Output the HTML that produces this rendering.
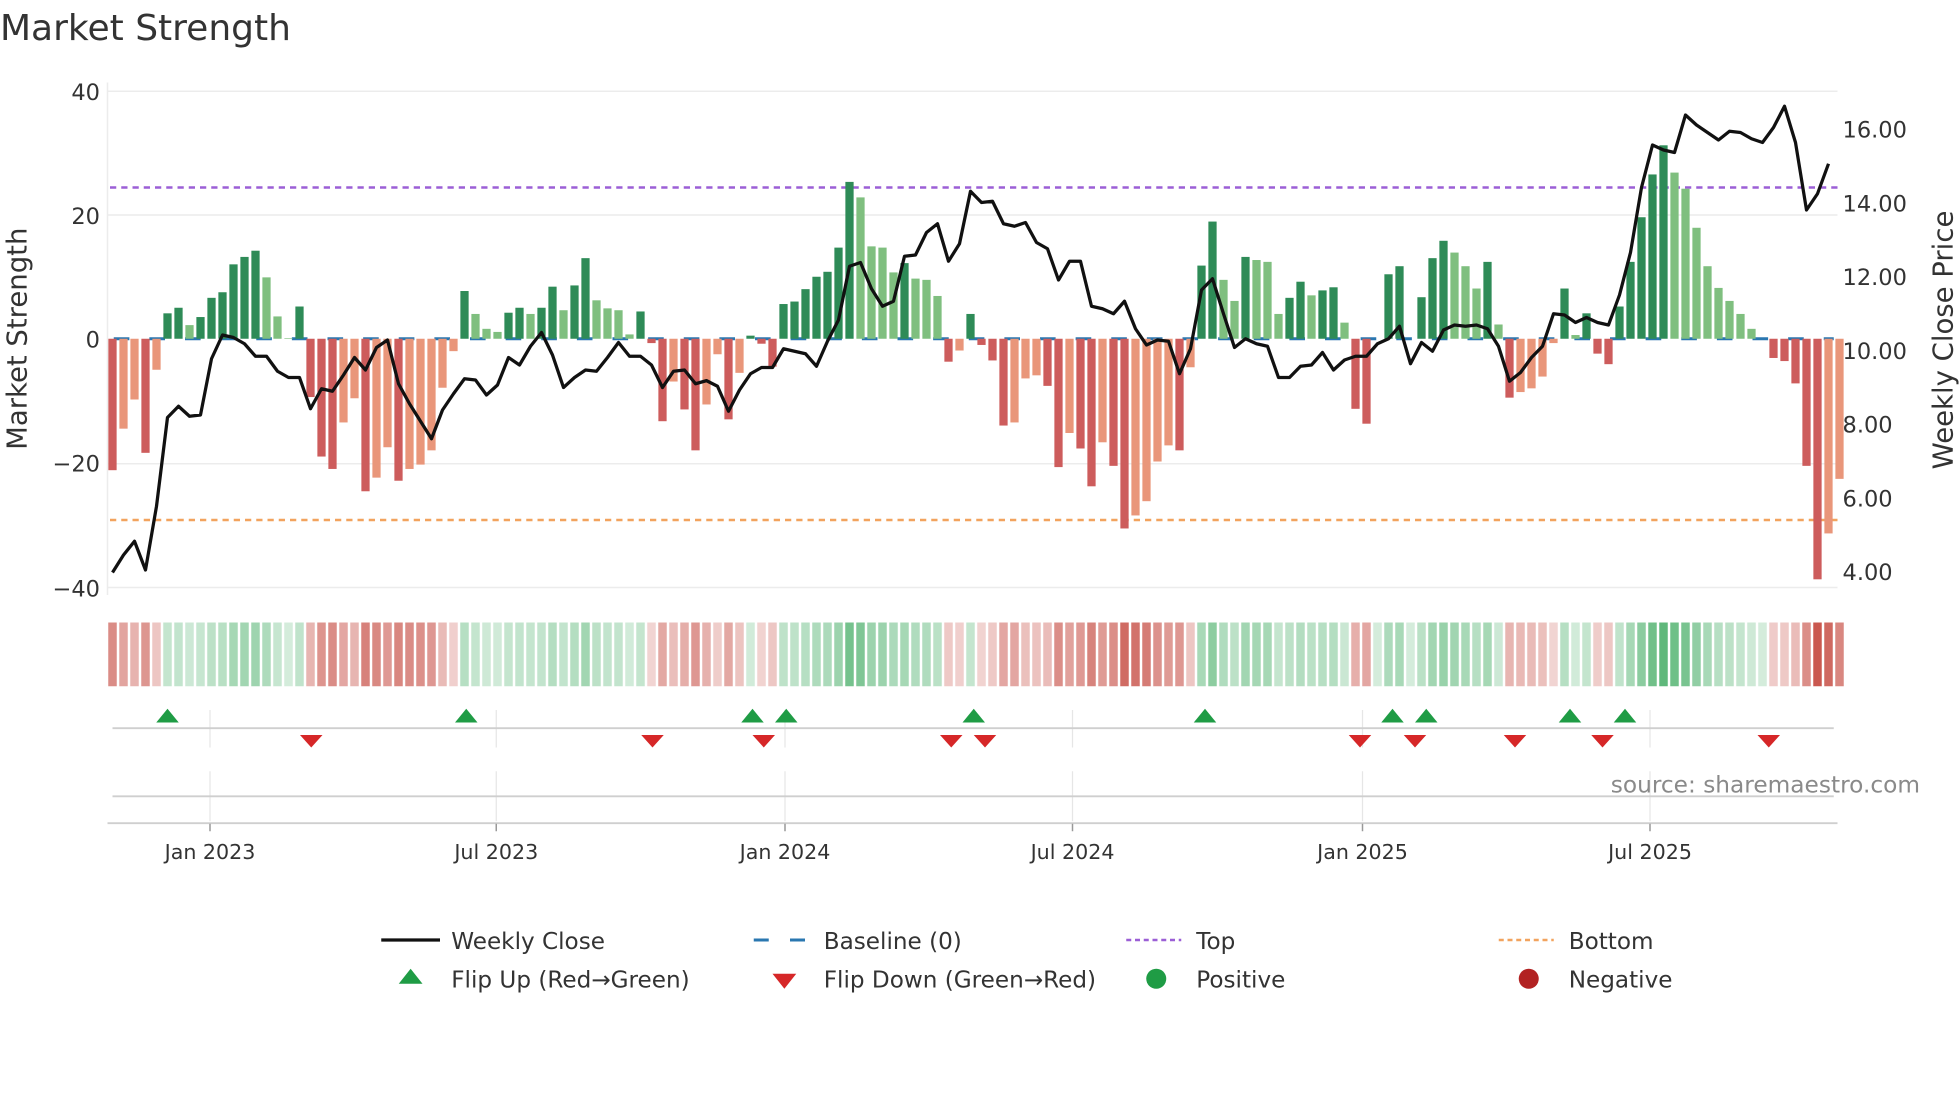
<!DOCTYPE html>
<html><head><meta charset="utf-8"><style>
html,body{margin:0;padding:0;background:#fff;}
svg{display:block;font-family:"DejaVu Sans","Liberation Sans",sans-serif;}
</style></head><body>
<svg id="s" width="1960" height="1102" viewBox="0 0 1568 881.6" xmlns="http://www.w3.org/2000/svg">
<rect width="1568" height="881.6" fill="#fff"/>
<text x="0" y="32" font-size="28.8" fill="#333">Market Strength</text>
<g stroke="#ececec" stroke-width="1.2">
<line x1="86" y1="73" x2="1470" y2="73"/><line x1="86" y1="172" x2="1470" y2="172"/>
<line x1="86" y1="371" x2="1470" y2="371"/><line x1="86" y1="470" x2="1470" y2="470"/>
<line x1="86" y1="66" x2="86" y2="476"/>
</g>
<g font-size="18" fill="#333" text-anchor="end">
<text x="80" y="80">40</text><text x="80" y="179">20</text><text x="80" y="278">0</text>
<text x="80" y="377">−20</text><text x="80" y="477">−40</text>
</g>
<g font-size="18" fill="#333">
<text x="1474" y="110">16.00</text><text x="1474" y="169">14.00</text><text x="1474" y="228">12.00</text>
<text x="1474" y="287">10.00</text><text x="1474" y="346">8.00</text><text x="1474" y="405">6.00</text><text x="1474" y="464">4.00</text>
</g>
<text transform="translate(21,271) rotate(-90)" font-size="22" fill="#333" text-anchor="middle">Market Strength</text>
<text transform="translate(1562,272) rotate(-90)" font-size="22" fill="#333" text-anchor="middle">Weekly Close Price</text>
<line x1="88" y1="150" x2="1470" y2="150" stroke="#9b5fd6" stroke-width="2" stroke-dasharray="5 4"/>
<line x1="88" y1="416" x2="1470" y2="416" stroke="#f2a35e" stroke-width="2" stroke-dasharray="5 4"/>
<line x1="91" y1="271" x2="1467" y2="271" stroke="#2a77b0" stroke-width="2.4" stroke-dasharray="12.5 16"/>
<g id="bars"></g>
<polyline id="price" fill="none" stroke="#111" stroke-width="2.6" stroke-linejoin="round"/>
<g id="heat"></g>
<g stroke="#e6e6e6" stroke-width="1">
<line x1="168" y1="568" x2="168" y2="598"/><line x1="397" y1="568" x2="397" y2="598"/><line x1="628" y1="568" x2="628" y2="598"/><line x1="858" y1="568" x2="858" y2="598"/><line x1="1090" y1="568" x2="1090" y2="598"/><line x1="1320" y1="568" x2="1320" y2="598"/>
<line x1="168" y1="617" x2="168" y2="657"/><line x1="397" y1="617" x2="397" y2="657"/><line x1="628" y1="617" x2="628" y2="657"/><line x1="858" y1="617" x2="858" y2="657"/><line x1="1090" y1="617" x2="1090" y2="657"/><line x1="1320" y1="617" x2="1320" y2="657"/>
</g>
<line x1="90" y1="582.5" x2="1467" y2="582.5" stroke="#cfcfcf" stroke-width="1.5"/>
<line x1="90" y1="637" x2="1467" y2="637" stroke="#cfcfcf" stroke-width="1.5"/>
<line x1="86" y1="658.5" x2="1470" y2="658.5" stroke="#cfcfcf" stroke-width="1.5"/>
<g stroke="#999" stroke-width="1.2">
<line x1="168" y1="659" x2="168" y2="665"/><line x1="397" y1="659" x2="397" y2="665"/><line x1="628" y1="659" x2="628" y2="665"/><line x1="858" y1="659" x2="858" y2="665"/><line x1="1090" y1="659" x2="1090" y2="665"/><line x1="1320" y1="659" x2="1320" y2="665"/>
</g>
<g id="flips"></g>
<text x="1536" y="634" font-size="18.6" fill="#8a8a8a" text-anchor="end">source: sharemaestro.com</text>
<g font-size="16.5" fill="#333" text-anchor="middle">
<text x="168" y="687">Jan 2023</text><text x="397" y="687">Jul 2023</text><text x="628" y="687">Jan 2024</text>
<text x="858" y="687">Jul 2024</text><text x="1090" y="687">Jan 2025</text><text x="1320" y="687">Jul 2025</text>
</g>
<g font-size="18.5" fill="#333">
<line x1="305" y1="752" x2="352" y2="752" stroke="#111" stroke-width="2.6"/>
<text x="361" y="759">Weekly Close</text>
<line x1="603" y1="752" x2="647" y2="752" stroke="#2a77b0" stroke-width="2.4" stroke-dasharray="12 17"/>
<text x="659" y="759">Baseline (0)</text>
<line x1="901" y1="752" x2="945" y2="752" stroke="#9b5fd6" stroke-width="2" stroke-dasharray="4 3"/>
<text x="957" y="759">Top</text>
<line x1="1199" y1="752" x2="1243" y2="752" stroke="#f2a35e" stroke-width="2" stroke-dasharray="4 3"/>
<text x="1255" y="759">Bottom</text>
<polygon points="319,787 338,787 328.5,775" fill="#1f9c45"/>
<text x="361" y="790">Flip Up (Red→Green)</text>
<polygon points="618,779 637,779 627.5,791" fill="#d62728"/>
<text x="659" y="790">Flip Down (Green→Red)</text>
<circle cx="925" cy="783" r="8" fill="#1f9c45"/>
<text x="957" y="790">Positive</text>
<circle cx="1223" cy="783" r="8" fill="#b22222"/>
<text x="1255" y="790">Negative</text>
</g>
</svg>
<script>
var V="-21.2D,-14.5S,-9.8S,-18.4D,-5S,4.1G,5G,2.2L,3.5G,6.6G,7.5G,12G,13.2G,14.2G,9.9L,3.6L,0.1L,5.2G,-9.4D,-19D,-21D,-13.5S,-9.6S,-24.6D,-22.4S,-17.5S,-22.9D,-21S,-20.3S,-18S,-7.9S,-2S,7.7G,4L,1.6L,1.1L,4.2G,5G,4L,5G,8.4G,4.6L,8.6G,13G,6.2L,4.9L,4.6L,0.7L,4.4G,-0.7D,-13.3D,-6.9S,-11.4D,-18D,-10.6S,-2.5S,-13D,-5.5S,0.5G,-0.8D,-4.5D,5.6G,6G,8G,10G,10.8G,14.7G,25.3G,22.8L,14.9L,14.7L,10.7L,12.2G,9.7L,9.5L,6.9L,-3.7D,-1.9S,4G,-1D,-3.5D,-14D,-13.5S,-6.4S,-5.9S,-7.6D,-20.7D,-15.2S,-17.7D,-23.8D,-16.7S,-20.5D,-30.6D,-28.5S,-26.2S,-19.8S,-17.2S,-18D,-4.6S,11.8G,18.9G,9.5L,6.1L,13.2G,12.7L,12.4L,4L,6.6G,9.2G,7L,7.8G,8.3G,2.6L,-11.3D,-13.7D,0G,10.4G,11.7G,0G,6.7G,13G,15.8G,13.9L,11.7L,8.1L,12.4G,2.3L,-9.5D,-8.6S,-8S,-6.1S,-0.7S,8.1G,0.6L,4.1G,-2.4D,-4.1D,5.2G,12.4G,19.6G,26.5G,31.2G,26.8L,24.2L,17.9L,11.7L,8.2L,6.1L,4L,1.6L,0G,-3.1D,-3.6D,-7.2D,-20.5D,-38.8D,-31.4S,-22.6S".split(",");
var P=[458,444,433,456,405,334,325,333,332,287,268,270,275,285,285,297,302,302,327,311,313,300,286,296,278,272,307,323,337,351,328,315,303,304,316,308,286,292,277,266,284,310,302,296,297,286,274,285,285,292,310,297,296,307,304.5,309,329,312,299,294,294,279,281,283,293,273,256,213,210,231,245,241,205,204,186,179,209,195,153,162,161,179,181,178,194,199,224,209,209,245,247,251,241,263,276,272,273,299,279,232,223,251,278,271,275,277,302,302,293,292,282,296,288,285,285,275,271,261,291,274,281,264,260,261,260,263,277,305,298,286,277,251,252,258,254,258,260,236,202,150,116,120,122,92,100,106,112,105,106,111,114,102,85,114,168,155,131];
var C={D:"#cd5c5c",S:"#e9967a",G:"#2e8b57",L:"#7fbf7f"};
var NS="http://www.w3.org/2000/svg",SP=8.8;
function el(t,a,p){var e=document.createElementNS(NS,t);for(var k in a)e.setAttribute(k,a[k]);p.appendChild(e);return e;}
var bars=document.getElementById("bars"),heat=document.getElementById("heat"),pts=[];
for(var i=0;i<V.length;i++){
 var s=V[i],t=s.slice(-1),v=parseFloat(s.slice(0,-1)),cx=90+SP*i,h=Math.abs(v)*4.96;
 if(h>0.3){el("rect",{x:cx-3.3,y:v>0?271-h:271,width:6.6,height:h,fill:C[t]},bars);}
 var pos=(t=="G"||t=="L");
 var a=0.22+0.68*Math.min(Math.abs(v),36)/36;
 el("rect",{x:cx-3.4,y:498,width:6.8,height:51,fill:pos?"#3aa85c":"#c4463c","fill-opacity":a.toFixed(2)},heat);
 pts.push(cx.toFixed(1)+","+P[i]);
}
document.getElementById("price").setAttribute("points",pts.join(" "));
var fl=document.getElementById("flips");
[134,373,602,629,779,964,1114,1141,1256,1300].forEach(function(x){el("polygon",{points:(x-9)+",578 "+(x+9)+",578 "+x+",567",fill:"#1f9c45"},fl);});
[249,522,611,761,788,1088,1132,1212,1282,1415].forEach(function(x){el("polygon",{points:(x-9)+",588 "+(x+9)+",588 "+x+",598",fill:"#d62728"},fl);});
</script>
</body></html>
